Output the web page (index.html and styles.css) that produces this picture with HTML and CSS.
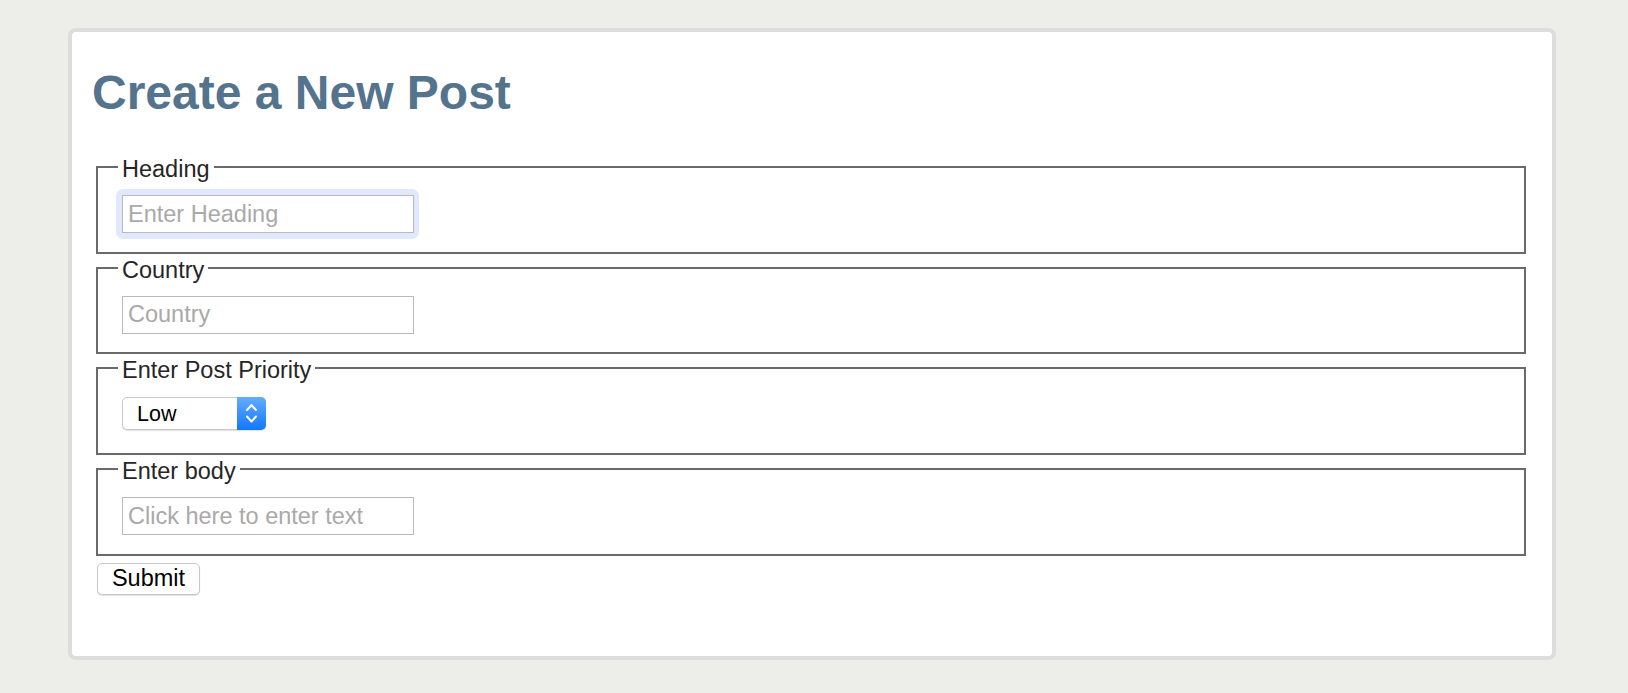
FILE: index.html
```html
<!DOCTYPE html>
<html lang="en">
<head>
<meta charset="utf-8">
<title>Create a New Post</title>
<link rel="stylesheet" href="styles.css">
</head>
<body>
<div class="card">
  <h1 class="title">Create a New Post</h1>
  <form class="post-form">
    <fieldset class="group">
      <legend class="group-label">Heading</legend>
      <div class="field-row">
        <span class="focus-ring"><input class="text-input" type="text" placeholder="Enter Heading"></span>
      </div>
    </fieldset>
    <fieldset class="group">
      <legend class="group-label">Country</legend>
      <div class="field-row">
        <input class="text-input" type="text" placeholder="Country">
      </div>
    </fieldset>
    <fieldset class="group">
      <legend class="group-label">Enter Post Priority</legend>
      <div class="field-row">
        <span class="select-wrap">
          <select class="select">
            <option>Low</option>
            <option>Medium</option>
            <option>High</option>
          </select>
          <span class="select-arrow">
            <svg width="29" height="33" viewBox="0 0 29 33" aria-hidden="true">
              <path d="M10 13 L14.5 8 L19 13" fill="none" stroke="#fff" stroke-width="2" stroke-linecap="round" stroke-linejoin="round"/>
              <path d="M10 19.5 L14.5 24.5 L19 19.5" fill="none" stroke="#fff" stroke-width="2" stroke-linecap="round" stroke-linejoin="round"/>
            </svg>
          </span>
        </span>
      </div>
    </fieldset>
    <fieldset class="group">
      <legend class="group-label">Enter body</legend>
      <div class="field-row">
        <input class="text-input" type="text" placeholder="Click here to enter text">
      </div>
    </fieldset>
    <button class="submit" type="button">Submit</button>
  </form>
</div>
</body>
</html>
```
FILE: styles.css
```css
html, body {
  margin: 0;
  padding: 0;
}

body {
  background: #ededE9;
  font-family: "Liberation Sans", Arial, Helvetica, sans-serif;
  color: #262626;
  min-height: 693px;
}

.card {
  box-sizing: border-box;
  width: 1488px;
  margin: 28px 0 0 68px;
  padding: 0 22px 61px 20px;
  background: #ffffff;
  border: 4px solid #dddddd;
  border-radius: 8px;
  overflow: hidden;
}

.title {
  margin: 33px 0 33px 0;
  font-size: 48px;
  line-height: 55px;
  font-weight: bold;
  color: #54748e;
}

.post-form {
  margin: 0;
}

.group {
  display: block;
  min-width: 0;
  margin: 0 4px;
  padding: 14px 20px 18.7px 24px;
  border: 2px solid #6a6a6a;
}

.group-label {
  margin-left: -4px;
  padding: 4px 4px 0 4px;
  font-size: 23.5px;
  line-height: 24px;
  color: #262626;
}

.field-row {
  display: flex;
  align-items: flex-start;
  height: 38px;
}

.focus-ring {
  display: block;
  margin: -6px;
  padding: 6px 5px 6px 6px;
  background: #dfe9fb;
  border-radius: 7px;
}

.text-input {
  display: block;
  box-sizing: border-box;
  width: 292px;
  height: 38px;
  margin: 0;
  padding: 0 5px;
  border: 1px solid #b9b9b9;
  border-radius: 0;
  background: #ffffff;
  font-family: "Liberation Sans", Arial, Helvetica, sans-serif;
  font-size: 23.5px;
  color: #222;
  outline: none;
}

.text-input::placeholder {
  color: #a9a9a9;
  opacity: 1;
}

.select-wrap {
  position: relative;
  display: block;
  width: 144px;
  height: 33px;
  margin-top: 1px;
}

.select {
  -webkit-appearance: none;
  appearance: none;
  box-sizing: border-box;
  display: block;
  width: 144px;
  height: 33px;
  margin: 0;
  padding: 0 0 0 14px;
  border: 1px solid #c9c9c9;
  border-radius: 5px;
  background: #ffffff;
  box-shadow: 0 1px 1px rgba(0, 0, 0, 0.12);
  font-family: "Liberation Sans", Arial, Helvetica, sans-serif;
  font-size: 21.5px;
  color: #000;
}

.select-arrow {
  position: absolute;
  top: 0;
  right: 0;
  width: 29px;
  height: 33px;
  border-radius: 0 5px 5px 0;
  background: linear-gradient(#62adff, #1477fb);
  pointer-events: none;
}

.select-arrow svg {
  display: block;
}

.submit {
  display: block;
  box-sizing: border-box;
  width: 103px;
  height: 32px;
  margin: 7px 0 0 5px;
  padding: 0;
  border: 1px solid #c8c8c8;
  border-radius: 5px;
  background: #ffffff;
  box-shadow: 0 1px 1px rgba(0, 0, 0, 0.12);
  font-family: "Liberation Sans", Arial, Helvetica, sans-serif;
  font-size: 23.5px;
  color: #000;
}
```
